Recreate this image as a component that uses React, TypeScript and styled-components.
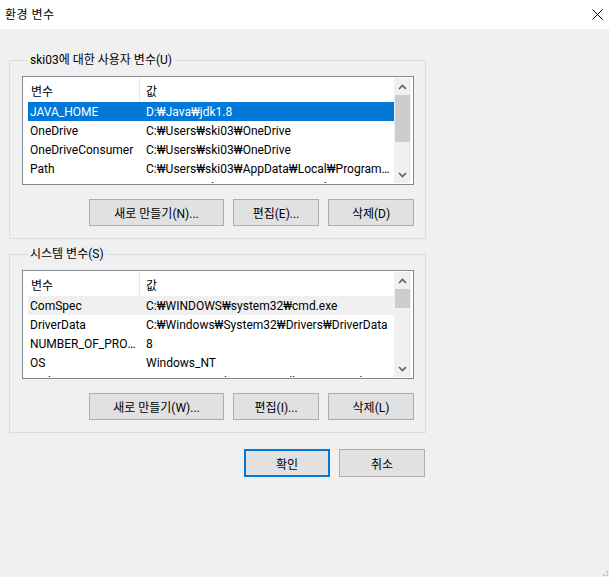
import React from "react";
import styled, { createGlobalStyle } from "styled-components";

const GlobalStyle = createGlobalStyle`
  html, body {
    margin: 0;
    padding: 0;
    background: #f0f0f0;
  }
  * {
    box-sizing: border-box;
  }
`;

const FONT = `Roboto, "Noto Sans CJK KR", sans-serif`;

/**
 * 창 전체
 */
const Window = styled.div`
  position: relative;
  width: 609px;
  height: 577px;
  display: flex;
  flex-direction: column;
  background-color: #f0f0f0;
  font-family: ${FONT};
  font-size: 12px;
  color: #000;
  overflow: hidden;
`;

const TitleBar = styled.div`
  height: 29px;
  display: flex;
  align-items: center;
  justify-content: space-between;
  padding: 0 6px 0 5px;
  background-color: #fff;
`;

const TitleText = styled.div`
  line-height: 16px;
  letter-spacing: 0.5px;
`;

const CloseButton = styled.div`
  width: 12px;
  height: 12px;
  display: flex;
  align-items: center;
  justify-content: center;
`;

const Body = styled.div`
  width: 426px;
  display: flex;
  flex-direction: column;
  padding: 23px 0 0 9px;
`;

/**
 * 그룹 박스
 */
const Group = styled.fieldset`
  margin: 0;
  min-width: 0;
  padding: 8px 11px 12px 12px;
  border: 1px solid #dcdcdc;
  display: flex;
  flex-direction: column;
  & + & {
    margin-top: 7px;
  }
`;

const Legend = styled.legend`
  margin-left: 6px;
  padding: 0 2px;
  height: 16px;
  line-height: 16px;
`;

/**
 * 목록
 */
const ListView = styled.div`
  height: 109px;
  display: flex;
  padding: 1px;
  border: 1px solid #828790;
  background-color: #fff;
`;

const ListMain = styled.div`
  flex: 1;
  min-width: 0;
  padding-left: 4px;
  overflow: hidden;
`;

const HeaderRow = styled.div`
  height: 24px;
  display: flex;
`;

const HeaderCell = styled.div<{ $width?: number }>`
  ${(p) => (p.$width ? `width: ${p.$width}px; flex: none;` : "flex: 1;")}
  display: flex;
  align-items: center;
  padding-left: ${(p) => (p.$width ? 3 : 6)}px;
  border-right: ${(p) => (p.$width ? "1px solid #e5e5e5" : "none")};
`;

const Row = styled.div<{ $state?: "active" | "inactive" }>`
  height: 19px;
  display: flex;
  align-items: center;
  white-space: nowrap;
  background-color: ${(p) =>
    p.$state === "active"
      ? "#0078d7"
      : p.$state === "inactive"
        ? "#f0f0f0"
        : "transparent"};
  color: ${(p) => (p.$state === "active" ? "#fff" : "#000")};
`;

const NameCell = styled.div`
  width: 112px;
  flex: none;
  padding-left: 2px;
  overflow: hidden;
  text-overflow: ellipsis;
`;

const ValueCell = styled.div`
  flex: 1;
  min-width: 0;
  padding-left: 6px;
  padding-right: 4px;
  overflow: hidden;
  text-overflow: ellipsis;
`;

const ScrollBar = styled.div`
  width: 17px;
  flex: none;
  display: flex;
  flex-direction: column;
  background-color: #f0f0f0;
  margin-right: 1px;
`;

const ScrollArrow = styled.div`
  height: 17px;
  flex: none;
  display: flex;
  align-items: center;
  justify-content: center;
`;

const ScrollTrack = styled.div`
  flex: 1;
  display: flex;
  flex-direction: column;
`;

const ScrollThumb = styled.div<{ $size: number }>`
  height: ${(p) => p.$size}px;
  margin: 0 1px;
  background-color: #cdcdcd;
`;

/**
 * 버튼
 */
const ButtonRow = styled.div`
  display: flex;
  justify-content: flex-end;
  gap: 9px;
  margin-top: 14px;
`;

const Button = styled.button<{ $width: number; $default?: boolean; $tall?: boolean }>`
  width: ${(p) => p.$width}px;
  height: ${(p) => (p.$tall ? 28 : 27)}px;
  padding: 0;
  font-family: ${FONT};
  font-size: 12px;
  color: #000;
  background-color: #e1e1e1;
  border: ${(p) => (p.$default ? "2px solid #0078d7" : "1px solid #adadad")};
  cursor: default;
`;

const DialogButtons = styled.div`
  width: 426px;
  display: flex;
  justify-content: flex-end;
  gap: 9px;
  margin-top: 16px;
  padding-right: 1px;
`;

const ResizeGrip = styled.div`
  position: absolute;
  right: 1px;
  bottom: 1px;
  width: 8px;
  height: 8px;
`;

type Variable = { name: string; value: string };

const userVars: Variable[] = [
  { name: "JAVA_HOME", value: "D:₩Java₩jdk1.8" },
  { name: "OneDrive", value: "C:₩Users₩ski03₩OneDrive" },
  { name: "OneDriveConsumer", value: "C:₩Users₩ski03₩OneDrive" },
  {
    name: "Path",
    value: "C:₩Users₩ski03₩AppData₩Local₩Programs₩Microsoft VS Code₩bin",
  },
  { name: "TEMP", value: "C:₩Users₩ski03₩AppData₩Local₩Temp" },
];

const systemVars: Variable[] = [
  { name: "ComSpec", value: "C:₩WINDOWS₩system32₩cmd.exe" },
  { name: "DriverData", value: "C:₩Windows₩System32₩Drivers₩DriverData" },
  { name: "NUMBER_OF_PROCESSORS", value: "8" },
  { name: "OS", value: "Windows_NT" },
  { name: "Path", value: "C:₩Program Files₩Java₩jdk1.8.0_281₩bin" },
];

const Chevron: React.FC<{ up?: boolean }> = ({ up }) => (
  <svg width="9" height="6" viewBox="0 0 9 6">
    <path
      d={up ? "M1 5 L4.5 1.5 L8 5" : "M1 1 L4.5 4.5 L8 1"}
      fill="none"
      stroke="#606060"
      strokeWidth="1.6"
    />
  </svg>
);

type VariableListProps = {
  items: Variable[];
  selected: number;
  focused?: boolean;
  thumbSize: number;
};

const VariableList: React.FC<VariableListProps> = ({
  items,
  selected,
  focused,
  thumbSize,
}) => {
  return (
    <ListView>
      <ListMain>
        <HeaderRow>
          <HeaderCell $width={112}>변수</HeaderCell>
          <HeaderCell>값</HeaderCell>
        </HeaderRow>
        {items.map((item, i) => (
          <Row
            key={item.name + i}
            $state={
              i === selected ? (focused ? "active" : "inactive") : undefined
            }
          >
            <NameCell>{item.name}</NameCell>
            <ValueCell>{item.value}</ValueCell>
          </Row>
        ))}
      </ListMain>
      <ScrollBar>
        <ScrollArrow>
          <Chevron up />
        </ScrollArrow>
        <ScrollTrack>
          <ScrollThumb $size={thumbSize} />
        </ScrollTrack>
        <ScrollArrow>
          <Chevron />
        </ScrollArrow>
      </ScrollBar>
    </ListView>
  );
};

const App: React.FC = () => {
  return (
    <>
      <GlobalStyle />
      <Window>
        <TitleBar>
          <TitleText>환경 변수</TitleText>
          <CloseButton>
            <svg width="11" height="11" viewBox="0 0 11 11">
              <path
                d="M0.5 0.5 L10.5 10.5 M10.5 0.5 L0.5 10.5"
                stroke="#000"
                strokeWidth="1"
              />
            </svg>
          </CloseButton>
        </TitleBar>
        <Body>
          <Group>
            <Legend>ski03에 대한 사용자 변수(U)</Legend>
            <VariableList items={userVars} selected={0} focused thumbSize={47} />
            <ButtonRow>
              <Button $width={135}>새로 만들기(N)...</Button>
              <Button $width={86}>편집(E)...</Button>
              <Button $width={86}>삭제(D)</Button>
            </ButtonRow>
          </Group>
          <Group>
            <Legend>시스템 변수(S)</Legend>
            <VariableList items={systemVars} selected={0} thumbSize={19} />
            <ButtonRow>
              <Button $width={135}>새로 만들기(W)...</Button>
              <Button $width={86}>편집(I)...</Button>
              <Button $width={86}>삭제(L)</Button>
            </ButtonRow>
          </Group>
        </Body>
        <DialogButtons>
          <Button $width={86} $default $tall>
            확인
          </Button>
          <Button $width={86} $tall>
            취소
          </Button>
        </DialogButtons>
        <ResizeGrip>
          <svg width="8" height="8" viewBox="0 0 8 8">
            <rect x="6" y="0" width="2" height="2" fill="#c8c8c8" />
            <rect x="3" y="3" width="2" height="2" fill="#c8c8c8" />
            <rect x="6" y="3" width="2" height="2" fill="#c8c8c8" />
            <rect x="0" y="6" width="2" height="2" fill="#c8c8c8" />
            <rect x="3" y="6" width="2" height="2" fill="#c8c8c8" />
            <rect x="6" y="6" width="2" height="2" fill="#c8c8c8" />
          </svg>
        </ResizeGrip>
      </Window>
    </>
  );
};

export default App;
